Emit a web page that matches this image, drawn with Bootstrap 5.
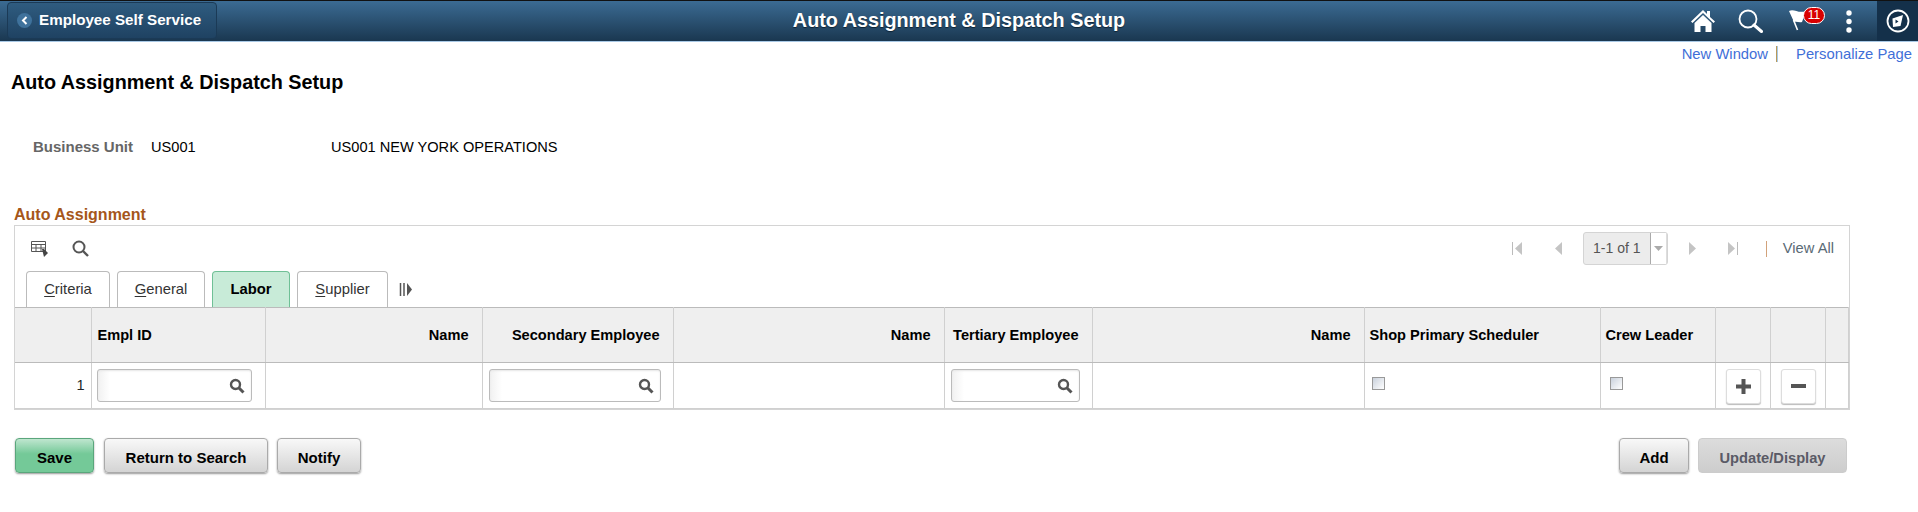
<!DOCTYPE html>
<html lang="en">
<head>
<meta charset="utf-8">
<title>Auto Assignment &amp; Dispatch Setup</title>
<link href="https://cdn.jsdelivr.net/npm/bootstrap@5.3.0/dist/css/bootstrap.min.css" rel="stylesheet">
<style>
html,body{height:512px;overflow:hidden}
body{font-family:"Liberation Sans",Arial,sans-serif;font-size:14px;color:#000;background:#fff}
.ps-head{height:42px;border-top:1px solid #111;border-bottom:1px solid #a9c9e6;background:linear-gradient(#3b6b93,#1a3750)}
.ps-back{margin-left:7px;margin-top:1px;width:210px;height:37px;border:1px solid #1b3a56;border-radius:4px;background:linear-gradient(#2f5c80,#1f4262);color:#fff;font-weight:700;font-size:15.2px;gap:7px;padding-left:9px}
.ps-back-dot{width:15px;height:15px;border-radius:50%;background:#3f729c}
.ps-title{color:#fff;font-size:19.8px;font-weight:700;text-shadow:0 1px 1px #0d2233;flex:1;text-align:center}
.ps-side{width:242px}
.ps-icons{width:242px;justify-content:flex-end}
.ps-ic{display:block}
.ps-srch{margin-left:23px}
.ps-flag{margin-left:26px;width:36px;height:34px;position:relative;margin-top:6px}
.ps-badge{position:absolute;left:14px;top:0;width:22px;height:17px;border-radius:9px;background:#d90000;border:1.500px solid #fff;color:#fff;font-size:12px;line-height:14px;text-align:center}
.ps-kebab{margin-left:21px;width:6px}
.ps-compass{margin-left:25px;width:41px;height:40px;background:#14304a}
.ps-links{height:26px;justify-content:flex-end;padding-right:6px;font-size:14.8px;line-height:26px;color:#3f6fd8;margin-top:-1px}
.ps-links a{color:#3f6fd8;text-decoration:none}
.ps-sep{width:2px;height:16px;background:#a9c9e6;border-left:1px solid #b99a5a;margin:0 18px 0 8px}
.ps-h1{font-size:19.8px;font-weight:700;margin:3px 0 0;padding-left:11px;line-height:24px;height:24px}
.ps-bu{margin-top:43px;padding-left:33px;height:20px;line-height:20px;font-size:14.6px}
.ps-bu-l{font-weight:700;color:#666;width:118px;font-size:15px}
.ps-bu-v{width:180px}
.ps-sect{margin:48px 0 0 14px;font-size:16px;font-weight:700;color:#a5561a;line-height:20px;height:20px}
.ps-grid{margin-left:14px;width:1836px;height:185px;border:1px solid #d4d4d4;border-bottom-width:2px}
.ps-tools{height:45px;padding:0 15px 0 16px}
.ps-pager{color:#999}
.ps-combo{width:85px;height:33px;border:1px solid #d4d4d4;border-radius:3px;background:#ececec;margin:0 21px;color:#555;font-size:14px}
.ps-combo-t{flex:1;text-align:center}
.ps-combo-b{width:17px;align-self:stretch;background:#fff;border-left:1px solid #aaa;border-right:1px solid #ddd}
.ps-prev{margin-left:33px}
.ps-last{margin-left:32px}
.ps-va{color:#5a6a75;font-size:14.7px}
.ps-vsep{width:1px;height:16px;background:#d2a27a;margin:0 16px 0 28px}
.ps-tabs{height:36px;padding-left:11px;gap:7px}
.ps-tab{height:36px;border:1px solid #bbb;border-bottom:0;border-radius:4px 4px 0 0;background:#fff;display:flex;align-items:center;justify-content:center;color:#333;font-size:14.8px}
.ps-tab u{text-underline-offset:2px}
.ps-tab-on{background:#c8ebd8;border-color:#6fc096;font-weight:700;color:#000}
.ps-t1{width:84px}.ps-t2{width:88px}.ps-t3{width:78px}.ps-t4{width:91px}
.ps-tbl{table-layout:fixed;width:1834px;border-collapse:collapse;margin:0;--bs-table-bg:transparent}
.ps-tbl th,.ps-tbl td{border:1px solid #d0d0d0;padding:0 13px 0 5px;vertical-align:middle;box-shadow:none}
.ps-tbl th{height:55px;background:#efefef;font-size:14.6px;font-weight:700;color:#000;border-top:1px solid #bbb;border-bottom:1px solid #bbb;padding-top:1px}
.ps-tbl th.ps-lft{padding-left:6px}
.ps-tbl td{height:46px}
.ps-tbl tr>:first-child{border-left:0}
.ps-tbl tr>:last-child{border-right:1px solid #d0d0d0}
.ps-tbl td:first-child{padding-right:6px;font-size:14.6px}
.ps-tbl td.ps-mid{padding-left:6px;padding-right:12px}
.c1{width:76px}.c2{width:174px}.c3{width:217px}.c4{width:191px}.c5{width:271px}.c6{width:148px}.c7{width:272px}.c8{width:236px}.c9{width:115px}.c10{width:55px}
.ps-in{height:33px;border:1px solid #bbb;border-radius:3px;background:linear-gradient(90deg,#f1f1f1,#fff 12px);box-shadow:inset 0 1px 2px #e6e6e6;justify-content:flex-end;padding-right:6px}
.ps-chk{width:13px;height:13px;border:1px solid #999;background:linear-gradient(135deg,#c9d1dc,#fff);display:block;margin-bottom:5px}
.ps-chk-a{margin-left:2px}.ps-chk-b{margin-left:4px}
.ps-sq{width:35px;height:35px;border:1px solid #ddd;border-radius:3px;background:#fff;box-shadow:0 1px 1px #bbb;margin-left:5px;margin-top:1px;color:#555;display:flex;align-items:center;justify-content:center;padding:0}
.ps-btns{margin:28px 71px 0 15px;gap:9px}
.ps-bt{height:35px;border:1px solid #aaa;border-radius:4px;background:linear-gradient(#f8f8f8,#d4d4d4);box-shadow:0 1px 2px #999;font-weight:700;font-size:15px;color:#000;padding:5px 0 0;display:flex;align-items:center;justify-content:center}
.ps-save{width:79px;background:linear-gradient(#bfe6cf,#74c998 45%,#74c998);border-color:#5aa67c;margin-right:1px}
.ps-ret{width:164px}.ps-not{width:84px}.ps-add{width:70px}
.ps-upd{width:149px;font-size:14.7px;color:#5a5a66;background:linear-gradient(#dcdcdc,#cdcdcd);border-color:#ccc;box-shadow:none}
</style>
</head>
<body>
<div class="ps-head d-flex">
  <div class="ps-side"><div class="ps-back d-flex align-items-center"><span class="ps-back-dot d-flex align-items-center justify-content-center"><svg width="7" height="9" viewBox="0 0 7 9"><path d="M5.500 1 2 4.500 5.500 8" fill="none" stroke="#fff" stroke-width="2"/></svg></span>Employee Self Service</div></div>
  <div class="ps-title align-self-center">Auto Assignment &amp; Dispatch Setup</div>
  <div class="ps-icons d-flex align-items-center">
    <svg class="ps-ic" width="24" height="24" viewBox="0 0 24 24"><path d="M12 1 0 12.500l1.500 1.500L12 4l10.500 10 1.500-1.500L19 8V2h-3v3z" fill="#fff"/><path d="M3.500 14 12 6l8.500 8v9H14.500v-6h-5v6H3.500z" fill="#fff"/></svg>
    <svg class="ps-ic ps-srch" width="25" height="25" viewBox="0 0 25 25"><circle cx="10" cy="10" r="8.500" fill="none" stroke="#fff" stroke-width="1.800"/><path d="m16 16 7.500 6.500" stroke="#fff" stroke-width="3" stroke-linecap="round"/></svg>
    <div class="ps-flag"><svg width="20" height="24" viewBox="0 0 20 24"><path d="M0 4c5-3 9 3 17 0l-4 11c-3 1-5-1-8 0z" fill="#fff"/><path d="m4.500 13 4 10" stroke="#fff" stroke-width="1.600"/></svg><span class="ps-badge">11</span></div>
    <svg class="ps-kebab" width="6" height="23" viewBox="0 0 6 23"><circle cx="3" cy="3" r="2.700" fill="#fff"/><circle cx="3" cy="11.500" r="2.700" fill="#fff"/><circle cx="3" cy="20" r="2.700" fill="#fff"/></svg>
    <div class="ps-compass d-flex align-items-center justify-content-center"><svg width="24" height="24" viewBox="0 0 24 24"><circle cx="12" cy="12" r="10.500" fill="none" stroke="#fff" stroke-width="1.800"/><path d="M6.500 9.500 17 6l-2.500 11L7 18z" fill="#fff"/><path d="m9.500 10.500 3 2-3 2z" fill="#14304a"/></svg></div>
  </div>
</div>
<div class="ps-links d-flex align-items-center"><a href="#">New Window</a><span class="ps-sep"></span><a href="#">Personalize Page</a></div>
<h1 class="ps-h1">Auto Assignment &amp; Dispatch Setup</h1>
<div class="ps-bu d-flex"><span class="ps-bu-l">Business Unit</span><span class="ps-bu-v">US001</span><span>US001 NEW YORK OPERATIONS</span></div>
<div class="ps-sect">Auto Assignment</div>
<div class="ps-grid">
  <div class="ps-tools d-flex align-items-center">
    <svg width="17" height="18" viewBox="0 0 17 18"><path d="M.5 1.500h14v10H.5zM.5 4.500h14M.5 8h14M5 4.500v7M10 4.500v7" fill="none" stroke="#555"/><path d="M11 9h2l4 4-4 4z" fill="#444"/></svg>
    <svg class="ms-4" width="17" height="17" viewBox="0 0 17 17"><circle cx="7" cy="7" r="5.500" fill="none" stroke="#555" stroke-width="2"/><path d="m11 11 5 5" stroke="#555" stroke-width="2.400"/></svg>
    <div class="ps-pager d-flex align-items-center ms-auto">
      <svg width="10" height="13" viewBox="0 0 10 13"><path d="M.5 0v13" stroke="#bbb"/><path d="M10 0v13L3 6.500z" fill="#c4c4c4"/></svg>
      <svg class="ps-prev" width="7" height="13" viewBox="0 0 7 13"><path d="M7 0v13L0 6.500z" fill="#c4c4c4"/></svg>
      <div class="ps-combo d-flex align-items-center"><span class="ps-combo-t">1-1 of 1</span><span class="ps-combo-b d-flex align-items-center justify-content-center"><svg width="9" height="5" viewBox="0 0 9 5"><path d="M0 0h9L4.500 5z" fill="#aaa"/></svg></span></div>
      <svg width="7" height="13" viewBox="0 0 7 13"><path d="M0 0v13l7-6.500z" fill="#c4c4c4"/></svg>
      <svg class="ps-last" width="10" height="13" viewBox="0 0 10 13"><path d="M0 0v13l7-6.500z" fill="#c4c4c4"/><path d="M9.500 0v13" stroke="#bbb"/></svg>
      <span class="ps-vsep"></span><span class="ps-va">View All</span>
    </div>
  </div>
  <div class="ps-tabs d-flex align-items-center">
    <div class="ps-tab ps-t1"><span><u>C</u>riteria</span></div>
    <div class="ps-tab ps-t2"><span><u>G</u>eneral</span></div>
    <div class="ps-tab ps-tab-on ps-t3">Labor</div>
    <div class="ps-tab ps-t4"><span><u>S</u>upplier</span></div>
    <svg class="ms-1" width="14" height="13" viewBox="0 0 14 13"><path d="M1.500 0v13M5 0v13" stroke="#555" stroke-width="1.500"/><path d="M8 0v13l5-6.500z" fill="#555"/></svg>
  </div>
  <table class="table ps-tbl">
    <colgroup><col class="c1"><col class="c2"><col class="c3"><col class="c4"><col class="c5"><col class="c6"><col class="c7"><col class="c8"><col class="c9"><col class="c10"><col class="c10"><col></colgroup>
    <thead><tr><th></th><th class="ps-lft">Empl ID</th><th class="text-end">Name</th><th class="text-end">Secondary Employee</th><th class="text-end">Name</th><th class="text-end">Tertiary Employee</th><th class="text-end">Name</th><th>Shop Primary Scheduler</th><th>Crew Leader</th><th></th><th></th><th></th></tr></thead>
    <tbody><tr>
      <td class="text-end">1</td>
      <td><div class="ps-in d-flex align-items-center"><svg width="16" height="16" viewBox="0 0 16 16"><circle cx="6.500" cy="6.500" r="4.500" fill="none" stroke="#555" stroke-width="2.400"/><path d="m10 10 4.500 4.500" stroke="#555" stroke-width="3"/></svg></div></td>
      <td></td>
      <td class="ps-mid"><div class="ps-in d-flex align-items-center"><svg width="16" height="16" viewBox="0 0 16 16"><circle cx="6.500" cy="6.500" r="4.500" fill="none" stroke="#555" stroke-width="2.400"/><path d="m10 10 4.500 4.500" stroke="#555" stroke-width="3"/></svg></div></td>
      <td></td>
      <td class="ps-mid"><div class="ps-in d-flex align-items-center"><svg width="16" height="16" viewBox="0 0 16 16"><circle cx="6.500" cy="6.500" r="4.500" fill="none" stroke="#555" stroke-width="2.400"/><path d="m10 10 4.500 4.500" stroke="#555" stroke-width="3"/></svg></div></td>
      <td></td>
      <td><span class="ps-chk ps-chk-a"></span></td>
      <td><span class="ps-chk ps-chk-b"></span></td>
      <td><button type="button" class="ps-sq" aria-label="Add row"><svg width="17" height="17" viewBox="0 0 17 17"><path d="M8.500 1v15M1 8.500h15" stroke="#555" stroke-width="4"/></svg></button></td>
      <td><button type="button" class="ps-sq" aria-label="Delete row"><svg width="17" height="4" viewBox="0 0 17 4"><path d="M1 2h15" stroke="#555" stroke-width="4"/></svg></button></td>
      <td></td>
    </tr></tbody>
  </table>
</div>
<div class="ps-btns d-flex">
  <button type="button" class="ps-bt ps-save">Save</button>
  <button type="button" class="ps-bt ps-ret">Return to Search</button>
  <button type="button" class="ps-bt ps-not">Notify</button>
  <button type="button" class="ps-bt ps-add ms-auto">Add</button>
  <button type="button" class="ps-bt ps-upd">Update/Display</button>
</div>
<script src="https://cdn.jsdelivr.net/npm/bootstrap@5.3.0/dist/js/bootstrap.bundle.min.js"></script>
</body>
</html>
